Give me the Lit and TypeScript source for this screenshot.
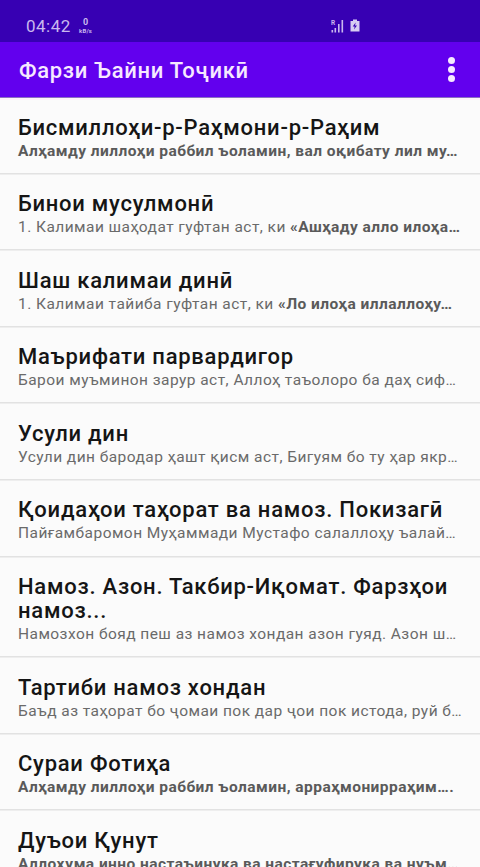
import { LitElement, html, css } from "lit";
import { customElement } from "lit/decorators.js";

type Row = { t: string; s: unknown };

const rows: Row[] = [
  { t: "Бисмиллоҳи-р-Раҳмони-р-Раҳим", s: html`<b>Алҳамду лиллоҳи раббил ъоламин, вал оқибату лил му…</b>` },
  { t: "Бинои мусулмонӣ", s: html`1. Калимаи шаҳодат гуфтан аст, ки <b>«Ашҳаду алло илоҳа…</b>` },
  { t: "Шаш калимаи динӣ", s: html`1. Калимаи тайиба гуфтан аст, ки <b>«Ло илоҳа иллаллоҳу…</b>` },
  { t: "Маърифати парвардигор", s: "Барои муъминон зарур аст, Аллоҳ таъолоро ба даҳ сиф…" },
  { t: "Усули дин", s: "Усули дин бародар ҳашт қисм аст, Бигуям бо ту ҳар якр…" },
  { t: "Қоидаҳои таҳорат ва намоз. Покизагӣ", s: "Пайғамбаромон Муҳаммади Мустафо салаллоҳу ъалай…" },
  { t: "Намоз. Азон. Такбир-Иқомат. Фарзҳои намоз...", s: "Намозхон бояд пеш аз намоз хондан азон гуяд. Азон ш…" },
  { t: "Тартиби намоз хондан", s: "Баъд аз таҳорат бо ҷомаи пок дар ҷои пок истода, руй б…" },
  { t: "Сураи Фотиҳа", s: html`<b>Алҳамду лиллоҳи раббил ъоламин, арраҳмонирраҳим….</b>` },
  { t: "Дуъои Қунут", s: html`<b>Аллоҳума инно настаъинука ва настағуфирука ва нуъм…</b>` },
];

@customElement("app-root")
export class AppRoot extends LitElement {
  static styles = css`
    :host {
      display: block;
      width: 480px;
      height: 867px;
      overflow: hidden;
      background: #fbfbfb;
      font-family: Roboto, "Noto Sans", sans-serif;
    }
    .status {
      height: 42px;
      background: #3700b3;
      color: #c9b8ee;
      display: flex;
      align-items: center;
      padding: 9px 0 0 26px;
      box-sizing: border-box;
    }
    .time {
      font-size: 17px;
      letter-spacing: 0.5px;
      width: 52px;
    }
    .speed {
      display: flex;
      flex-direction: column;
      align-items: center;
      font-size: 6px;
      line-height: 7px;
      font-weight: 700;
      letter-spacing: 0.2px;
      margin-left: 1px;
    }
    .speed span:first-child {
      font-size: 9px;
      line-height: 9px;
    }
    .sys {
      margin-left: auto;
      margin-right: 120px;
      display: flex;
      gap: 5px;
      align-items: center;
    }
    .bar {
      height: 55px;
      background: #6200ee;
      display: flex;
      align-items: center;
      justify-content: space-between;
      padding: 0 25px 0 19px;
      box-shadow: 0 1px 0 #8a6fc0, 0 3px 0 #fdf2fa;
      position: relative;
    }
    .title {
      color: #f6e9ff;
      font-size: 22px;
      font-weight: 500;
      letter-spacing: 0.69px;
      padding-top: 2px;
    }
    .dots {
      display: flex;
      flex-direction: column;
      gap: 2px;
    }
    .dots i {
      display: block;
      width: 7px;
      height: 7px;
      border-radius: 50%;
      background: #f6e9ff;
    }
    .row {
      padding: 18.5px 20px 11.1px 18px;
      border-bottom: 1px solid #e2e2e2;
      box-shadow: 0 1px 0 #eeeeee;
    }
    .t {
      font-size: 22px;
      line-height: 24px;
      font-weight: 500;
      color: #151515;
      letter-spacing: 0.75px;
    }
    .s {
      font-size: 15.5px;
      line-height: 22px;
      color: #6a6a6a;
      letter-spacing: 0.45px;
      white-space: nowrap;
    }
    .s b {
      color: #5a5a5a;
    }
  `;

  render() {
    return html`
      <div class="status">
        <span class="time">04:42</span>
        <span class="speed"><span>0</span><span>kB/s</span></span>
        <div class="sys">
          <svg width="14" height="14" viewBox="0 0 14 14" fill="#c9b8ee">
            <text x="0" y="6" font-size="6.5" font-weight="700" font-family="Roboto">R</text>
            <rect x="0.5" y="11" width="1.6" height="2.5" />
            <rect x="3.5" y="9" width="1.6" height="4.5" />
            <rect x="7" y="5" width="1.6" height="8.5" />
            <rect x="10.5" y="1" width="1.6" height="12.5" />
          </svg>
          <svg width="10" height="13" viewBox="0 0 10 13">
            <path d="M3 0.5h4v1.5h2.500v10.500h-9v-10.500h2.500z" fill="#d8ccf2" />
            <path d="M5.700 3.500l-3 4h2l-0.700 3 3-4h-2z" fill="#3700b3" />
          </svg>
        </div>
      </div>
      <div class="bar">
        <span class="title">Фарзи Ъайни Тоҷикӣ</span>
        <span class="dots"><i></i><i></i><i></i></span>
      </div>
      ${rows.map(
        (r) => html`<div class="row">
          <div class="t">${r.t}</div>
          <div class="s">${r.s}</div>
        </div>`
      )}
    `;
  }
}
